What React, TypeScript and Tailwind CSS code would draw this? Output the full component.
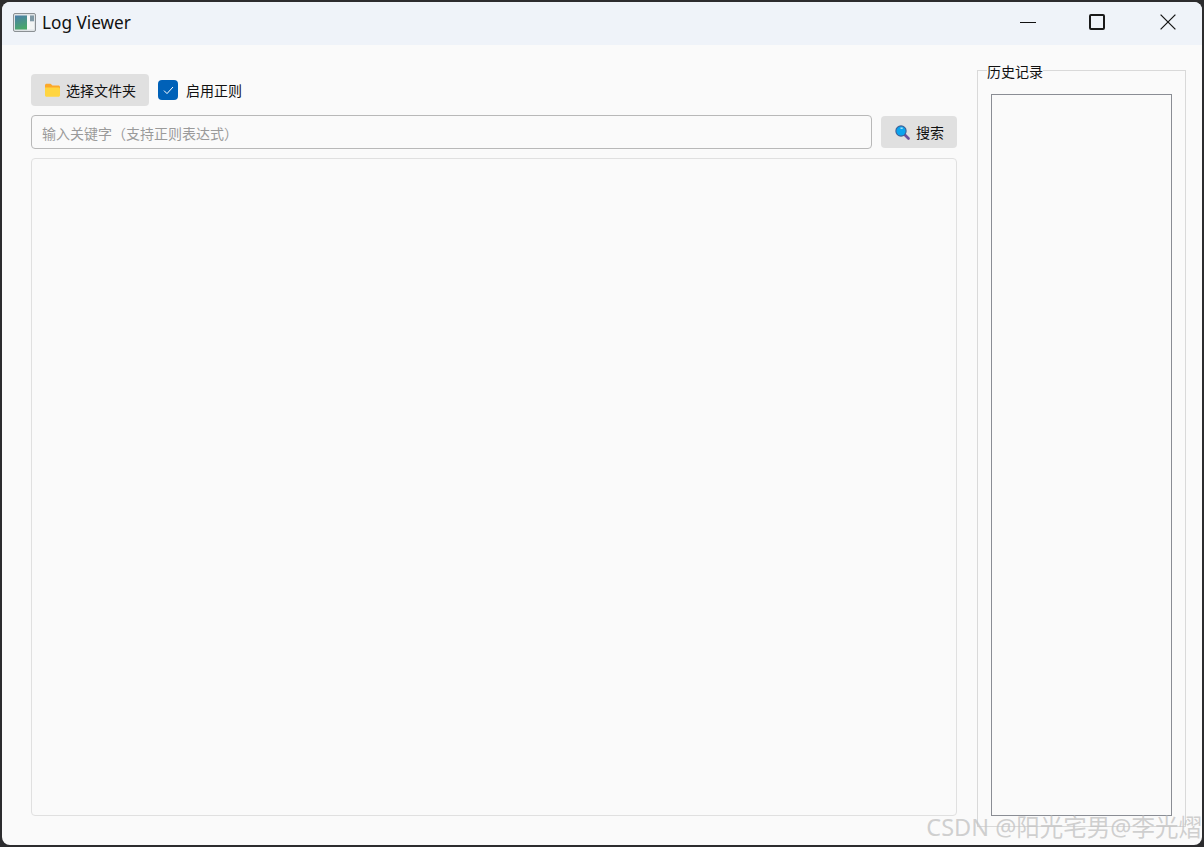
const cjk = "font-['Noto_Sans','Noto_Sans_CJK_SC',sans-serif]";

function AppIcon() {
  return (
    <svg width="23" height="19" viewBox="0 0 23 19">
      <rect x="0.5" y="0.5" width="22" height="18" rx="1.5" fill="#dfe3e6" stroke="#8b9094" />
      <defs>
        <linearGradient id="pane" x1="0.2" y1="0" x2="0.5" y2="1">
          <stop offset="0" stopColor="#4a7fa8" />
          <stop offset="1" stopColor="#4aa868" />
        </linearGradient>
      </defs>
      <rect x="2" y="2.5" width="12" height="14" fill="url(#pane)" />
      <rect x="14" y="2.5" width="3" height="14" fill="#f7f8f8" />
      <rect x="17" y="2.5" width="4" height="6" fill="#7f98a5" />
      <rect x="17" y="8.5" width="4" height="8" fill="#f2f4f4" />
    </svg>
  );
}

function FolderIcon() {
  return (
    <svg width="15" height="14" viewBox="0 0 15 14">
      <path d="M0 2.5C0 1.4.7.8 1.6.8h3.6c.6 0 .9.2 1.2.6l1 1.1h5.9c1 0 1.7.7 1.7 1.6V6H0z" fill="#fca82a" />
      <path d="M0 4.6h13.4c.9 0 1.6.6 1.6 1.5v6.2c0 .9-.7 1.5-1.6 1.5H1.6C.7 13.8 0 13.2 0 12.3z" fill="#ffd540" />
    </svg>
  );
}

function SearchIcon() {
  return (
    <svg width="15" height="15" viewBox="0 0 15 15">
      <path d="M9.5 9.5l4 4" stroke="#6b4f9c" strokeWidth="2.6" strokeLinecap="round" />
      <circle cx="6" cy="6" r="5.7" fill="#3f5f95" />
      <circle cx="6" cy="6" r="4.6" fill="#0ba4ee" />
      <rect x="5.5" y="2.6" width="2.2" height="1.2" fill="#c6ecfc" />
    </svg>
  );
}

export default function App() {
  return (
    <div className={`relative h-[847px] w-[1204px] overflow-hidden bg-[#2c2c2e] px-[2px] pt-[2px] pb-[2px] ${cjk}`}>
      <div className="flex h-full flex-col overflow-hidden rounded-[8px] bg-[#fafafa]">
        <header className="flex h-[43px] shrink-0 items-center bg-[#eff3f9] pb-[3px] pl-[11px]">
          <AppIcon />
          <span className="mt-[2px] ml-[6px] text-[17.2px] leading-none text-[#111]">Log Viewer</span>
          <div className="ml-auto flex items-center">
            <div className="mr-[53px] h-[1px] w-[16px] bg-[#111]" />
            <div className="mr-[55px] h-[16px] w-[16px] rounded-[2px] border-2 border-[#1a1a1a]" />
            <svg width="16" height="16" viewBox="0 0 16 16" className="mr-[26px]">
              <path d="M.6.6l14.8 14.8M15.4.6L.6 15.4" stroke="#1a1a1a" strokeWidth="1.3" fill="none" />
            </svg>
          </div>
        </header>
        <main className="flex min-h-0 flex-1 pl-[29px]">
          <section className="flex w-[926px] shrink-0 flex-col pt-[29px] pb-[29px]">
            <div className="flex h-[32px] items-center">
              <button className="flex h-[32px] w-[118px] items-center rounded-[4px] bg-[#e0e0e0] pl-[14px] text-[14px] text-[#111]">
                <FolderIcon />
                <span className="ml-[6px]">选择文件夹</span>
              </button>
              <div className="ml-[9px] flex h-[20px] w-[20px] items-center justify-center rounded-[4px] bg-[#0061b8]">
                <svg width="11" height="9" viewBox="0 0 11 9">
                  <path d="M1 4.6l3 3L10 1" stroke="#fff" strokeWidth="1" fill="none" />
                </svg>
              </div>
              <span className="ml-[8px] text-[14px] text-[#111]">启用正则</span>
            </div>
            <div className="mt-[9px] flex h-[34px] items-center">
              <div className="flex h-[34px] w-[841px] items-center rounded-[4px] border border-[#b8b8b8] pt-[2px] pl-[10px] text-[14px] text-[#9a9a9a]">
                输入关键字（支持正则表达式）
              </div>
              <button className="ml-[9px] flex h-[32px] w-[76px] items-center rounded-[4px] bg-[#e0e0e0] pl-[14px] text-[14px] text-[#111]">
                <SearchIcon />
                <span className="ml-[6px]">搜索</span>
              </button>
            </div>
            <div className="mt-[9px] min-h-0 flex-1 rounded-[4px] border border-[#e0e0e0]" />
          </section>
          <aside className="relative mt-[25px] mb-[18px] ml-[20px] flex w-[209px] shrink-0 flex-col border border-[#d9d9d9] px-[13px] pt-[23px] pb-[10px]">
            <span className="absolute top-[-8px] left-[9px] bg-[#fafafa] text-[14px] leading-[18px] text-[#111]">历史记录</span>
            <div className="min-h-0 flex-1 border border-[#8a8d94]" />
          </aside>
        </main>
      </div>
      <span className="absolute right-[2px] bottom-[5px] text-[23.5px] leading-[30px] whitespace-nowrap text-[#c4c4c4]/80">CSDN @阳光宅男@李光熠</span>
    </div>
  );
}
